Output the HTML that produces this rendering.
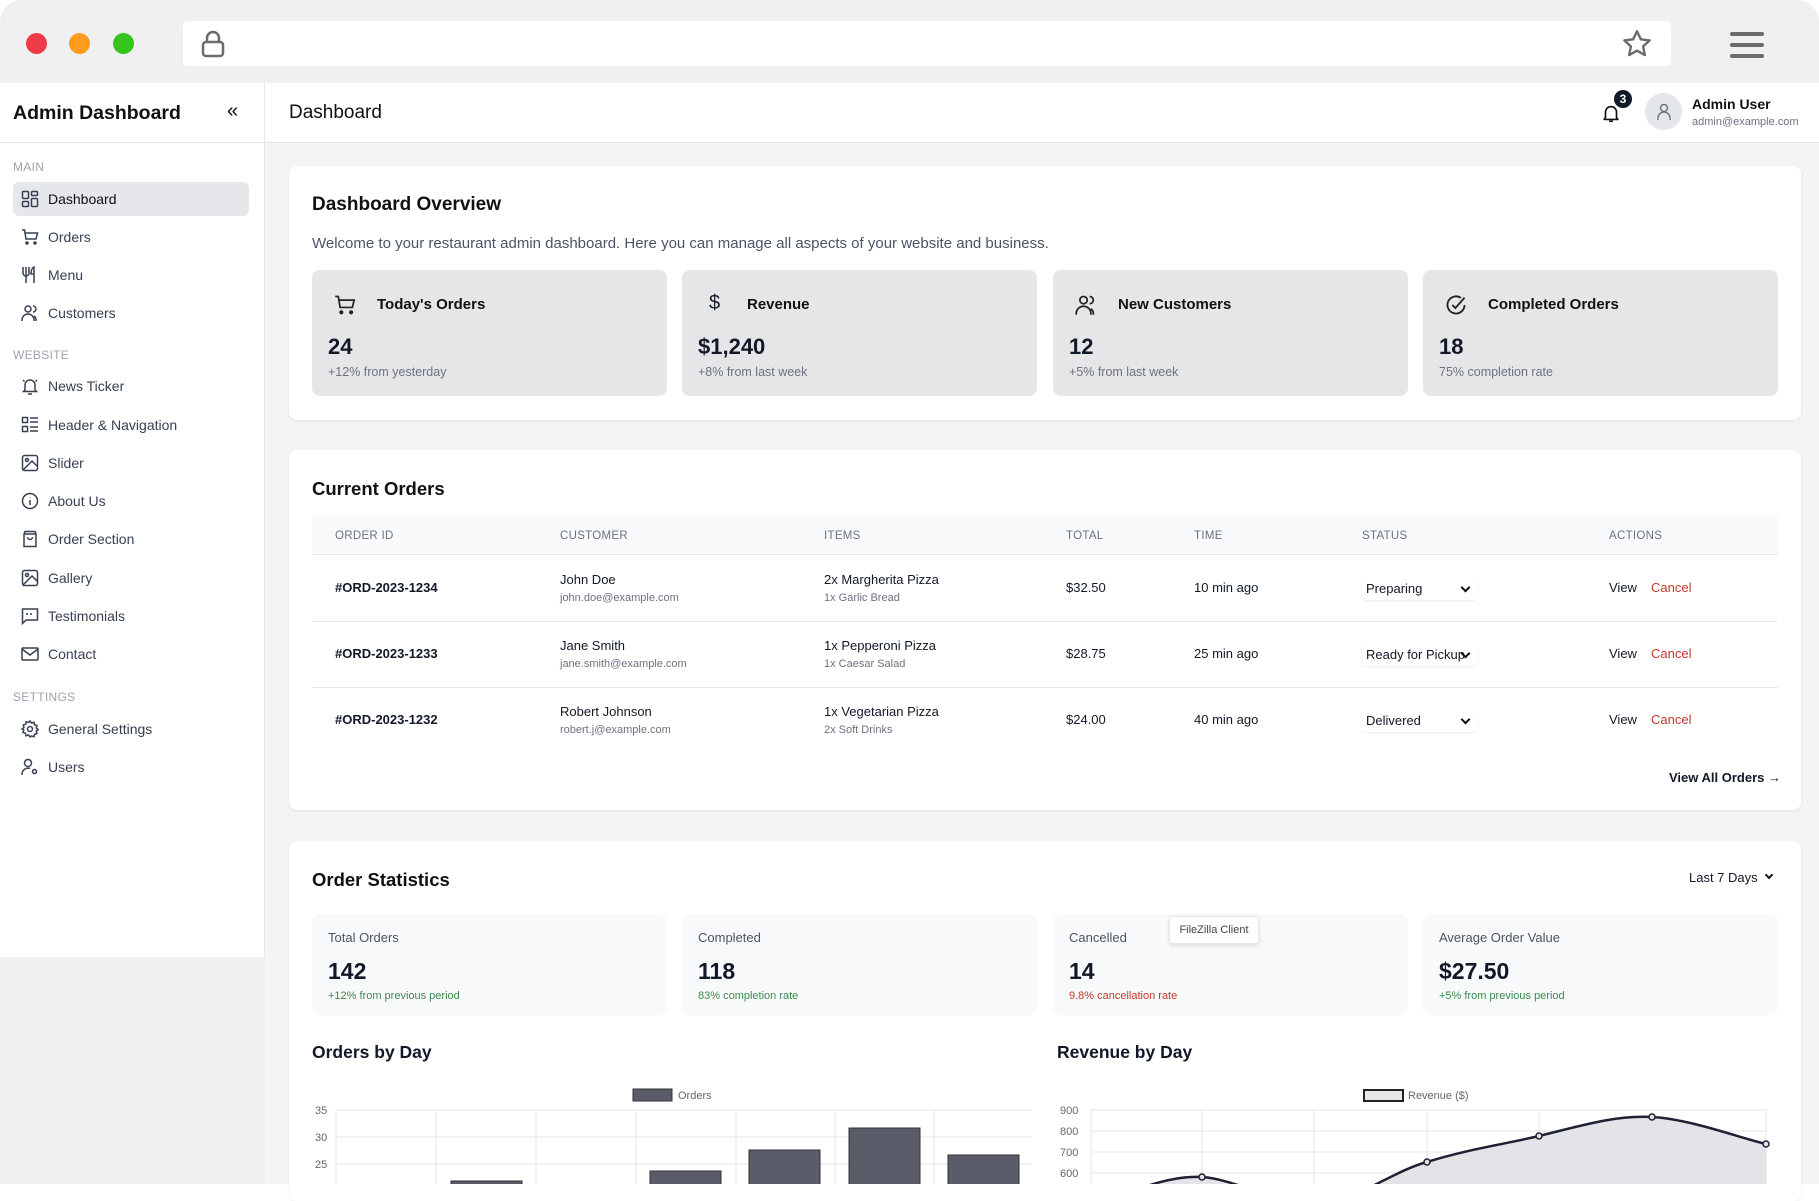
<!DOCTYPE html>
<html><head><meta charset="utf-8"><style>
*{box-sizing:border-box;margin:0;padding:0}
body{width:1819px;height:1184px;overflow:hidden;background:#fff;font-family:"Liberation Sans",sans-serif;color:#111827;position:relative}
.a{position:absolute}
.frame{left:0;top:0;width:1819px;height:1184px;background:#f0f0f0;border-radius:22px 22px 0 0;overflow:hidden}
.dot{width:21px;height:21px;border-radius:50%;top:33px}
svg{display:block}
.side{left:0;top:83px;width:265px;height:874px;background:#fff;border-right:1px solid #e5e7eb}
.main{left:265px;top:83px;width:1554px;height:1101px;background:#f3f4f6}
.sec{font-size:12px;color:#9ca3af;left:13px;letter-spacing:.3px}
.it{left:13px;width:236px;height:34px;font-size:14px;color:#374151;display:flex;align-items:center;padding-left:8px;border-radius:6px}
.it svg{margin-right:9px}
.card{background:#fff;border-radius:8px;box-shadow:0 1px 3px rgba(0,0,0,.08)}
.sb{background:#e6e6e9;border-radius:8px;height:126px;width:355px;top:270px}
.sb .t{position:absolute;left:65px;top:26px;font-size:15px;font-weight:bold;color:#111}
.sb .ic{position:absolute;left:22px;top:24px}
.sb .n{position:absolute;left:16px;top:64px;font-size:22px;font-weight:bold}
.sb .s{position:absolute;left:16px;top:95px;font-size:12.5px;color:#6b7280}
.th{font-size:11.5px;color:#6b7280;top:530px;letter-spacing:.3px}
.row{font-size:13px}
.sm{font-size:11px;color:#6b7280}
.sel{font-size:13px;width:115px;height:22px;border-radius:4px;box-shadow:0 1px 2px rgba(0,0,0,.08);padding:3px 4px;background:#fff}
.sel:after{content:"";position:absolute;right:8px;top:6px;width:5px;height:5px;border-right:2px solid #111;border-bottom:2px solid #111;transform:rotate(45deg)}
.os{background:#f8f9fa;border-radius:8px;top:914px;height:101px;width:355px}
.os .l{position:absolute;left:16px;top:16px;font-size:13px;color:#4b5563}
.os .n{position:absolute;left:16px;top:44px;font-size:23px;font-weight:bold}
.os .s{position:absolute;left:16px;top:76px;font-size:11px}
</style></head><body>
<div class="a frame">
 <div class="a dot" style="left:26px;background:#ee3b46"></div>
 <div class="a dot" style="left:69px;background:#fd9c1f"></div>
 <div class="a dot" style="left:113px;background:#34c41c"></div>
 <div class="a" style="left:183px;top:21px;width:1488px;height:45px;background:#fff;border-radius:4px"></div>
 <svg class="a" style="left:200px;top:30px" width="26" height="28" viewBox="0 0 26 28"><path d="M7 12V8a6 6 0 0 1 12 0v4" fill="none" stroke="#6b6b6b" stroke-width="2.5"/><rect x="3" y="12" width="20" height="14" rx="3" fill="none" stroke="#6b6b6b" stroke-width="2.5"/></svg>
 <svg class="a" style="left:1621px;top:28px" width="32" height="32" viewBox="0 0 24 24"><path d="M12 2.5l2.9 6 6.6.8-4.9 4.5 1.3 6.5L12 17l-5.9 3.3 1.3-6.5-4.9-4.5 6.6-.8z" fill="none" stroke="#6b6b6b" stroke-width="1.8" stroke-linejoin="round"/></svg>
 <div class="a" style="left:1730px;top:32px;width:34px;height:4px;background:#6b6b6b;border-radius:2px"></div>
 <div class="a" style="left:1730px;top:43px;width:34px;height:4px;background:#6b6b6b;border-radius:2px"></div>
 <div class="a" style="left:1730px;top:54px;width:34px;height:4px;background:#6b6b6b;border-radius:2px"></div>
</div>

<div class="a main"></div>
<div class="a" style="left:265px;top:83px;width:1554px;height:60px;background:#fff;border-bottom:1px solid #e5e7eb"></div>
<div class="a" style="left:289px;top:102px;font-size:19px;color:#111">Dashboard</div>
<svg class="a" style="left:1600px;top:101px" width="22" height="24" viewBox="0 0 24 24"><path d="M6 17V11a6 6 0 0 1 12 0v6l1.5 2h-15z" fill="none" stroke="#111" stroke-width="1.8" stroke-linejoin="round"/><path d="M10 21h4" stroke="#111" stroke-width="1.8"/></svg>
<div class="a" style="left:1614px;top:90px;width:18px;height:18px;border-radius:50%;background:#111827;color:#fff;font-size:12px;font-weight:bold;text-align:center;line-height:18px">3</div>
<div class="a" style="left:1645px;top:93px;width:37px;height:37px;border-radius:50%;background:#e5e7eb"></div>
<svg class="a" style="left:1655px;top:102px" width="18" height="20" viewBox="0 0 18 20"><circle cx="9" cy="6" r="3.5" fill="none" stroke="#6b7280" stroke-width="1.4"/><path d="M3 18v-2a6 6 0 0 1 12 0v2" fill="none" stroke="#6b7280" stroke-width="1.4"/></svg>
<div class="a" style="left:1692px;top:96px;font-size:14px;font-weight:bold;color:#111">Admin User</div>
<div class="a" style="left:1692px;top:116px;font-size:11px;color:#6b7280">admin@example.com</div>

<div class="a side"></div>
<div class="a" style="left:0;top:83px;width:265px;height:60px;border-bottom:1px solid #e5e7eb"></div>
<div class="a" style="left:13px;top:102px;font-size:19.5px;font-weight:bold;color:#111">Admin Dashboard</div>
<div class="a" style="left:227px;top:100px;font-size:20px;color:#111">«</div>
<div class="a sec" style="top:160px">MAIN</div>
<div class="a it" style="top:182px;background:#e5e7eb;color:#111">
<svg width="18" height="18" viewBox="0 0 18 18" fill="none" stroke="#374151" stroke-width="1.5"><rect x="1.5" y="1.5" width="6" height="7" rx="1"/><rect x="10.5" y="1.5" width="6" height="4" rx="1"/><rect x="1.5" y="11.5" width="6" height="5" rx="1"/><rect x="10.5" y="8.5" width="6" height="8" rx="1"/></svg>Dashboard</div>
<div class="a it" style="top:220px"><svg width="18" height="18" viewBox="0 0 18 18" fill="none" stroke="#374151" stroke-width="1.5"><path d="M1 2h2.5l1.5 9h10l1.5-6H4"/><circle cx="6" cy="15" r="1" fill="#374151"/><circle cx="14" cy="15" r="1" fill="#374151"/></svg>Orders</div>
<div class="a it" style="top:258px"><svg width="18" height="18" viewBox="0 0 18 18" fill="none" stroke="#374151" stroke-width="1.5"><path d="M2 1v6a3 3 0 0 0 6 0V1M5 1v16M13 17V1c-2 1-3 3-3 7h3"/></svg>Menu</div>
<div class="a it" style="top:296px"><svg width="18" height="18" viewBox="0 0 18 18" fill="none" stroke="#374151" stroke-width="1.5"><circle cx="7" cy="5" r="3"/><path d="M1 17v-1a6 6 0 0 1 12 0v1M12 2a3 3 0 0 1 0 6M15 17v-1a5 5 0 0 0-2-4"/></svg>Customers</div>
<div class="a sec" style="top:348px">WEBSITE</div>
<div class="a it" style="top:369px"><svg width="18" height="18" viewBox="0 0 18 18" fill="none" stroke="#374151" stroke-width="1.5"><path d="M4 13V8a5 5 0 0 1 10 0v5l1.5 1.5h-13zM7 17h4M2 3l1.5 1.5M16 3l-1.5 1.5"/></svg>News Ticker</div>
<div class="a it" style="top:408px"><svg width="18" height="18" viewBox="0 0 18 18" fill="none" stroke="#374151" stroke-width="1.5"><rect x="1.5" y="1.5" width="5" height="5"/><rect x="1.5" y="10.5" width="5" height="5"/><path d="M9 2h8M9 6h8M9 11h8M9 15h8"/></svg>Header &amp; Navigation</div>
<div class="a it" style="top:446px"><svg width="18" height="18" viewBox="0 0 18 18" fill="none" stroke="#374151" stroke-width="1.5"><rect x="1.5" y="1.5" width="15" height="15" rx="2"/><circle cx="6" cy="6" r="1.5"/><path d="M16 12l-5-5-9 9"/></svg>Slider</div>
<div class="a it" style="top:484px"><svg width="18" height="18" viewBox="0 0 18 18" fill="none" stroke="#374151" stroke-width="1.5"><circle cx="9" cy="9" r="7.5"/><path d="M9 8v5M9 5v.5"/></svg>About Us</div>
<div class="a it" style="top:522px"><svg width="18" height="18" viewBox="0 0 18 18" fill="none" stroke="#374151" stroke-width="1.5"><path d="M3 4l1-2.5h10L15 4v12.5H3zM3 4h12M6.5 7a2.5 2.5 0 0 0 5 0"/></svg>Order Section</div>
<div class="a it" style="top:561px"><svg width="18" height="18" viewBox="0 0 18 18" fill="none" stroke="#374151" stroke-width="1.5"><rect x="1.5" y="1.5" width="15" height="15" rx="2"/><circle cx="6" cy="6" r="1.5"/><path d="M16 12l-5-5-9 9"/></svg>Gallery</div>
<div class="a it" style="top:599px"><svg width="18" height="18" viewBox="0 0 18 18" fill="none" stroke="#374151" stroke-width="1.5"><path d="M1.5 2h15v11H5l-3.5 3.5zM6 6v2M10 6v2"/></svg>Testimonials</div>
<div class="a it" style="top:637px"><svg width="18" height="18" viewBox="0 0 18 18" fill="none" stroke="#374151" stroke-width="1.5"><rect x="1" y="3" width="16" height="12" rx="1"/><path d="M1 4l8 6 8-6"/></svg>Contact</div>
<div class="a sec" style="top:690px">SETTINGS</div>
<div class="a it" style="top:712px"><svg width="18" height="18" viewBox="0 0 18 18" fill="none" stroke="#374151" stroke-width="1.5"><circle cx="9" cy="9" r="2.5"/><path d="M9 1l1.5 2 2.5-.8.5 2.5 2.5.8-.8 2.5 2 1.5-2 1.5.8 2.5-2.5.8-.5 2.5-2.5-.8L9 17l-1.5-2-2.5.8-.5-2.5-2.5-.8.8-2.5L1 9l2-1.5-.8-2.5 2.5-.8.5-2.5 2.5.8z"/></svg>General Settings</div>
<div class="a it" style="top:750px"><svg width="18" height="18" viewBox="0 0 18 18" fill="none" stroke="#374151" stroke-width="1.5"><circle cx="7" cy="5" r="3.5"/><path d="M1 17v-1a6 6 0 0 1 8-5.5"/><circle cx="13.5" cy="13.5" r="2"/></svg>Users</div>

<!-- overview -->
<div class="a card" style="left:289px;top:166px;width:1512px;height:254px"></div>
<div class="a" style="left:312px;top:194px;font-size:19px;font-weight:bold;color:#111">Dashboard Overview</div>
<div class="a" style="left:312px;top:235px;font-size:15px;color:#4b5563">Welcome to your restaurant admin dashboard. Here you can manage all aspects of your website and business.</div>
<div class="a sb" style="left:312px"><svg class="ic" width="22" height="22" viewBox="0 0 18 18" fill="none" stroke="#222" stroke-width="1.4"><path d="M1 2h2.5l1.5 9h10l1.5-6H4"/><circle cx="6" cy="15" r="1" fill="#222"/><circle cx="14" cy="15" r="1" fill="#222"/></svg><div class="t">Today's Orders</div><div class="n">24</div><div class="s">+12% from yesterday</div></div>
<div class="a sb" style="left:682px"><div class="ic" style="font-size:20px;left:27px;top:22px">$</div><div class="t">Revenue</div><div class="n">$1,240</div><div class="s">+8% from last week</div></div>
<div class="a sb" style="left:1053px"><svg class="ic" width="22" height="22" viewBox="0 0 18 18" fill="none" stroke="#222" stroke-width="1.4"><circle cx="7" cy="5" r="3"/><path d="M1 17v-1a6 6 0 0 1 12 0v1M12 2a3 3 0 0 1 0 6M15 17v-1a5 5 0 0 0-2-4"/></svg><div class="t">New Customers</div><div class="n">12</div><div class="s">+5% from last week</div></div>
<div class="a sb" style="left:1423px"><svg class="ic" width="22" height="22" viewBox="0 0 18 18" fill="none" stroke="#222" stroke-width="1.5"><path d="M16 9a7 7 0 1 1-3-5.8"/><path d="M6 9l2.5 2.5L16 3"/></svg><div class="t">Completed Orders</div><div class="n">18</div><div class="s">75% completion rate</div></div>

<!-- current orders -->
<div class="a card" style="left:289px;top:450px;width:1512px;height:360px"></div>
<div class="a" style="left:312px;top:478px;font-size:18.5px;font-weight:bold;color:#111">Current Orders</div>
<div class="a" style="left:312px;top:515px;width:1466px;height:40px;background:#f9fafb;border-bottom:1px solid #e5e7eb"></div>
<div class="a th" style="left:335px">ORDER ID</div><div class="a th" style="left:560px">CUSTOMER</div><div class="a th" style="left:824px">ITEMS</div><div class="a th" style="left:1066px">TOTAL</div><div class="a th" style="left:1194px">TIME</div><div class="a th" style="left:1362px">STATUS</div><div class="a th" style="left:1609px">ACTIONS</div>
<div class="a" style="left:312px;top:621px;width:1466px;height:1px;background:#e5e7eb"></div>
<div class="a" style="left:312px;top:687px;width:1466px;height:1px;background:#e5e7eb"></div>

<div class="a row" style="left:335px;top:580px;font-weight:bold">#ORD-2023-1234</div>
<div class="a row" style="left:560px;top:572px">John Doe</div><div class="a sm" style="left:560px;top:592px">john.doe@example.com</div>
<div class="a row" style="left:824px;top:572px">2x Margherita Pizza</div><div class="a sm" style="left:824px;top:592px">1x Garlic Bread</div>
<div class="a row" style="left:1066px;top:580px">$32.50</div><div class="a row" style="left:1194px;top:580px">10 min ago</div>
<div class="a sel" style="left:1362px;top:578px">Preparing</div>
<div class="a row" style="left:1609px;top:580px">View</div><div class="a row" style="left:1651px;top:580px;color:#c0392b">Cancel</div>

<div class="a row" style="left:335px;top:646px;font-weight:bold">#ORD-2023-1233</div>
<div class="a row" style="left:560px;top:638px">Jane Smith</div><div class="a sm" style="left:560px;top:658px">jane.smith@example.com</div>
<div class="a row" style="left:824px;top:638px">1x Pepperoni Pizza</div><div class="a sm" style="left:824px;top:658px">1x Caesar Salad</div>
<div class="a row" style="left:1066px;top:646px">$28.75</div><div class="a row" style="left:1194px;top:646px">25 min ago</div>
<div class="a sel" style="left:1362px;top:644px">Ready for Pickup</div>
<div class="a row" style="left:1609px;top:646px">View</div><div class="a row" style="left:1651px;top:646px;color:#c0392b">Cancel</div>

<div class="a row" style="left:335px;top:712px;font-weight:bold">#ORD-2023-1232</div>
<div class="a row" style="left:560px;top:704px">Robert Johnson</div><div class="a sm" style="left:560px;top:724px">robert.j@example.com</div>
<div class="a row" style="left:824px;top:704px">1x Vegetarian Pizza</div><div class="a sm" style="left:824px;top:724px">2x Soft Drinks</div>
<div class="a row" style="left:1066px;top:712px">$24.00</div><div class="a row" style="left:1194px;top:712px">40 min ago</div>
<div class="a sel" style="left:1362px;top:710px">Delivered</div>
<div class="a row" style="left:1609px;top:712px">View</div><div class="a row" style="left:1651px;top:712px;color:#c0392b">Cancel</div>
<div class="a" style="left:1669px;top:770px;font-size:13px;font-weight:bold">View All Orders →</div>

<!-- order statistics -->
<div class="a card" style="left:289px;top:841px;width:1512px;height:360px"></div>
<div class="a" style="left:312px;top:869px;font-size:18.5px;font-weight:bold;color:#111">Order Statistics</div>
<div class="a" style="left:1689px;top:870px;font-size:13px">Last 7 Days</div>
<div class="a" style="left:1766px;top:872px;width:6px;height:6px;border-right:2px solid #111;border-bottom:2px solid #111;transform:rotate(45deg)"></div>
<div class="a os" style="left:312px"><div class="l">Total Orders</div><div class="n">142</div><div class="s" style="color:#3c8a4e">+12% from previous period</div></div>
<div class="a os" style="left:682px"><div class="l">Completed</div><div class="n">118</div><div class="s" style="color:#3c8a4e">83% completion rate</div></div>
<div class="a os" style="left:1053px"><div class="l">Cancelled</div><div class="n">14</div><div class="s" style="color:#c0392b">9.8% cancellation rate</div></div>
<div class="a os" style="left:1423px"><div class="l">Average Order Value</div><div class="n">$27.50</div><div class="s" style="color:#3c8a4e">+5% from previous period</div></div>
<div class="a" style="left:1169px;top:916px;width:90px;height:28px;background:#fff;border:1px solid #e5e7eb;border-radius:3px;box-shadow:0 2px 4px rgba(0,0,0,.1);font-size:11px;color:#444;text-align:center;line-height:26px">FileZilla Client</div>

<div class="a" style="left:312px;top:1042px;font-size:17.5px;font-weight:bold">Orders by Day</div>
<div class="a" style="left:1057px;top:1042px;font-size:17.5px;font-weight:bold">Revenue by Day</div>

<svg class="a" style="left:300px;top:1080px" width="740" height="104" font-family="Liberation Sans" font-size="11" fill="#666">
 <rect x="333" y="9" width="39" height="12" fill="#5a5c69" stroke="#333" stroke-width="1"/><text x="378" y="19">Orders</text>
 <g stroke="#e5e5e5"><line x1="36" y1="30" x2="732" y2="30"/><line x1="36" y1="57" x2="732" y2="57"/><line x1="36" y1="84" x2="732" y2="84"/>
 <line x1="36" y1="30" x2="36" y2="104"/><line x1="136" y1="30" x2="136" y2="104"/><line x1="236" y1="30" x2="236" y2="104"/><line x1="336" y1="30" x2="336" y2="104"/><line x1="436" y1="30" x2="436" y2="104"/><line x1="535" y1="30" x2="535" y2="104"/><line x1="634" y1="30" x2="634" y2="104"/></g>
 <text x="15" y="34">35</text><text x="15" y="61">30</text><text x="15" y="88">25</text>
 <g fill="#5a5c69" stroke="#333"><rect x="151" y="101" width="71" height="10"/><rect x="350" y="91" width="71" height="20"/><rect x="449" y="70" width="71" height="40"/><rect x="549" y="48" width="71" height="60"/><rect x="648" y="75" width="71" height="40"/></g>
</svg>

<svg class="a" style="left:1050px;top:1080px" width="740" height="104" font-family="Liberation Sans" font-size="11" fill="#666">
 <rect x="314" y="10" width="39" height="11" fill="#e5e7eb" stroke="#222" stroke-width="2"/><text x="358" y="19">Revenue ($)</text>
 <g stroke="#e5e5e5"><line x1="41" y1="30" x2="716" y2="30"/><line x1="41" y1="51" x2="716" y2="51"/><line x1="41" y1="72" x2="716" y2="72"/><line x1="41" y1="93" x2="716" y2="93"/>
 <line x1="41" y1="30" x2="41" y2="104"/><line x1="152" y1="30" x2="152" y2="104"/><line x1="264" y1="30" x2="264" y2="104"/><line x1="377" y1="30" x2="377" y2="104"/><line x1="489" y1="30" x2="489" y2="104"/><line x1="602" y1="30" x2="602" y2="104"/><line x1="716" y1="30" x2="716" y2="104"/></g>
 <text x="10" y="34">900</text><text x="10" y="55">800</text><text x="10" y="76">700</text><text x="10" y="97">600</text>
 <path d="M41 130 C80 110 120 95 152 97 C185 99 230 125 264 125 C300 125 340 92 377 82 C415 70 450 65 489 56 C530 46 565 35 602 37 C640 39 690 58 716 64 L716 104 L41 104Z" fill="#e3e4e7"/>
 <path d="M41 130 C80 110 120 95 152 97 C185 99 230 125 264 125 C300 125 340 92 377 82 C415 70 450 65 489 56 C530 46 565 35 602 37 C640 39 690 58 716 64" fill="none" stroke="#1f2033" stroke-width="2.5"/>
 <g fill="#e3e4e7" stroke="#1f2033" stroke-width="1.5"><circle cx="152" cy="97" r="3"/><circle cx="377" cy="82" r="3"/><circle cx="489" cy="56" r="3"/><circle cx="602" cy="37" r="3"/><circle cx="716" cy="64" r="3"/></g>
</svg>
</body></html>
